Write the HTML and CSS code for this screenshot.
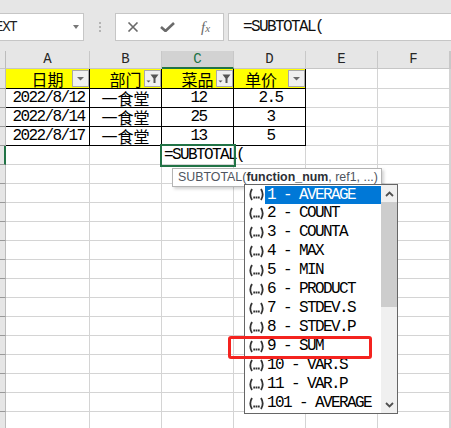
FILE: index.html
```html
<!DOCTYPE html>
<html>
<head>
<meta charset="utf-8">
<link rel="stylesheet" href="styles.css">
</head>
<body>
<div class="top">
  <div class="fbar">
    <div class="namebox"><span class="nb-text">TEXT</span><span class="nb-caret"></span></div>
    <div class="sep"><i></i><i></i><i></i></div>
    <div class="btns">
      <span class="slot"><svg width="12" height="10" viewBox="0 0 12 10"><path d="M1.5 0.5 L10.5 9.5 M10.5 0.5 L1.5 9.5" stroke="#6a6a6a" stroke-width="1.6" fill="none"/></svg></span>
      <span class="slot"><svg width="15" height="10" viewBox="0 0 15 10"><path d="M1 5 L5.5 9 L14 1" stroke="#6a6a6a" stroke-width="2.6" fill="none"/></svg></span>
      <span class="slot fx"><i>f</i><i class="x">x</i></span>
    </div>
    <div class="fbox">=SUBTOTAL(</div>
  </div>
</div>

<div class="sheet">
  <div class="row hdr">
    <div class="rh"></div><div class="ch">A</div><div class="ch">B</div><div class="ch sel">C</div><div class="ch">D</div><div class="ch">E</div><div class="ch">F</div><div class="ch"></div>
  </div>
  <div class="row r1">
    <div class="rh"></div>
    <div class="c t y sp"><span class="cn">日期</span><span class="fb"><svg width="15" height="15" viewBox="0 0 15 15"><path d="M4 6 H11 L7.5 9.5 Z" fill="#6a6a6a"/></svg></span></div>
    <div class="c t y sp"><span class="cn">部门</span><span class="fb"><svg width="15" height="15" viewBox="0 0 15 15"><path d="M1.5 9.5 H5.5 L3.5 11.5 Z" fill="#555"/><path d="M5.5 3.5 H13.5 L10.5 7.5 V12 H8.5 V7.5 Z" fill="#555"/></svg></span></div>
    <div class="c t y sp"><span class="cn">菜品</span><span class="fb"><svg width="15" height="15" viewBox="0 0 15 15"><path d="M1.5 9.5 H5.5 L3.5 11.5 Z" fill="#555"/><path d="M5.5 3.5 H13.5 L10.5 7.5 V12 H8.5 V7.5 Z" fill="#555"/></svg></span></div>
    <div class="c t y"><span class="cn">单价</span><span class="fb"><svg width="15" height="15" viewBox="0 0 15 15"><path d="M4 6 H11 L7.5 9.5 Z" fill="#6a6a6a"/></svg></span></div>
    <div class="c"></div><div class="c"></div><div class="c"></div>
  </div>
  <div class="row">
    <div class="rh"></div><div class="c t m">2022/8/12</div><div class="c t k">一食堂</div><div class="c t m">12</div><div class="c t m">2.5</div><div class="c"></div><div class="c"></div><div class="c"></div>
  </div>
  <div class="row">
    <div class="rh"></div><div class="c t m">2022/8/14</div><div class="c t k">一食堂</div><div class="c t m">25</div><div class="c t m">3</div><div class="c"></div><div class="c"></div><div class="c"></div>
  </div>
  <div class="row">
    <div class="rh"></div><div class="c t m">2022/8/17</div><div class="c t k">一食堂</div><div class="c t m">13</div><div class="c t m">5</div><div class="c"></div><div class="c"></div><div class="c"></div>
  </div>
  <div class="row">
    <div class="rh rsel"></div><div class="c"></div><div class="c"></div><div class="c active">=SUBTOTAL(</div><div class="c nob"></div><div class="c"></div><div class="c"></div><div class="c"></div>
  </div>
  <div class="row"><div class="rh"></div><div class="c"></div><div class="c"></div><div class="c"></div><div class="c"></div><div class="c"></div><div class="c"></div><div class="c"></div></div>
  <div class="row"><div class="rh"></div><div class="c"></div><div class="c"></div><div class="c"></div><div class="c"></div><div class="c"></div><div class="c"></div><div class="c"></div></div>
  <div class="row"><div class="rh"></div><div class="c"></div><div class="c"></div><div class="c"></div><div class="c"></div><div class="c"></div><div class="c"></div><div class="c"></div></div>
  <div class="row"><div class="rh"></div><div class="c"></div><div class="c"></div><div class="c"></div><div class="c"></div><div class="c"></div><div class="c"></div><div class="c"></div></div>
  <div class="row"><div class="rh"></div><div class="c"></div><div class="c"></div><div class="c"></div><div class="c"></div><div class="c"></div><div class="c"></div><div class="c"></div></div>
  <div class="row"><div class="rh"></div><div class="c"></div><div class="c"></div><div class="c"></div><div class="c"></div><div class="c"></div><div class="c"></div><div class="c"></div></div>
  <div class="row"><div class="rh"></div><div class="c"></div><div class="c"></div><div class="c"></div><div class="c"></div><div class="c"></div><div class="c"></div><div class="c"></div></div>
  <div class="row"><div class="rh"></div><div class="c"></div><div class="c"></div><div class="c"></div><div class="c"></div><div class="c"></div><div class="c"></div><div class="c"></div></div>
  <div class="row"><div class="rh"></div><div class="c"></div><div class="c"></div><div class="c"></div><div class="c"></div><div class="c"></div><div class="c"></div><div class="c"></div></div>
  <div class="row"><div class="rh"></div><div class="c"></div><div class="c"></div><div class="c"></div><div class="c"></div><div class="c"></div><div class="c"></div><div class="c"></div></div>
  <div class="row"><div class="rh"></div><div class="c"></div><div class="c"></div><div class="c"></div><div class="c"></div><div class="c"></div><div class="c"></div><div class="c"></div></div>
  <div class="row"><div class="rh"></div><div class="c"></div><div class="c"></div><div class="c"></div><div class="c"></div><div class="c"></div><div class="c"></div><div class="c"></div></div>
  <div class="row"><div class="rh"></div><div class="c"></div><div class="c"></div><div class="c"></div><div class="c"></div><div class="c"></div><div class="c"></div><div class="c"></div></div>
  <div class="row"><div class="rh"></div><div class="c"></div><div class="c"></div><div class="c"></div><div class="c"></div><div class="c"></div><div class="c"></div><div class="c"></div></div>

  <div class="tip">SUBTOTAL(<b>function_num</b>, ref1, ...)</div>

  <div class="dd">
    <div class="items">
      <div class="it on"><span class="ic"><svg width="17" height="13" viewBox="0 0 17 13"><path d="M4 1 Q0.6 6.5 4 12 M13 1 Q16.4 6.5 13 12" stroke="#333" stroke-width="1.8" fill="none"/><rect x="5.3" y="8.5" width="1.8" height="2" fill="#333"/><rect x="7.6" y="8.5" width="1.8" height="2" fill="#333"/><rect x="9.9" y="8.5" width="1.8" height="2" fill="#333"/></svg></span><span class="lb">1 - AVERAGE</span></div>
      <div class="it"><span class="ic"><svg width="17" height="13" viewBox="0 0 17 13"><path d="M4 1 Q0.6 6.5 4 12 M13 1 Q16.4 6.5 13 12" stroke="#333" stroke-width="1.8" fill="none"/><rect x="5.3" y="8.5" width="1.8" height="2" fill="#333"/><rect x="7.6" y="8.5" width="1.8" height="2" fill="#333"/><rect x="9.9" y="8.5" width="1.8" height="2" fill="#333"/></svg></span><span class="lb">2 - COUNT</span></div>
      <div class="it"><span class="ic"><svg width="17" height="13" viewBox="0 0 17 13"><path d="M4 1 Q0.6 6.5 4 12 M13 1 Q16.4 6.5 13 12" stroke="#333" stroke-width="1.8" fill="none"/><rect x="5.3" y="8.5" width="1.8" height="2" fill="#333"/><rect x="7.6" y="8.5" width="1.8" height="2" fill="#333"/><rect x="9.9" y="8.5" width="1.8" height="2" fill="#333"/></svg></span><span class="lb">3 - COUNTA</span></div>
      <div class="it"><span class="ic"><svg width="17" height="13" viewBox="0 0 17 13"><path d="M4 1 Q0.6 6.5 4 12 M13 1 Q16.4 6.5 13 12" stroke="#333" stroke-width="1.8" fill="none"/><rect x="5.3" y="8.5" width="1.8" height="2" fill="#333"/><rect x="7.6" y="8.5" width="1.8" height="2" fill="#333"/><rect x="9.9" y="8.5" width="1.8" height="2" fill="#333"/></svg></span><span class="lb">4 - MAX</span></div>
      <div class="it"><span class="ic"><svg width="17" height="13" viewBox="0 0 17 13"><path d="M4 1 Q0.6 6.5 4 12 M13 1 Q16.4 6.5 13 12" stroke="#333" stroke-width="1.8" fill="none"/><rect x="5.3" y="8.5" width="1.8" height="2" fill="#333"/><rect x="7.6" y="8.5" width="1.8" height="2" fill="#333"/><rect x="9.9" y="8.5" width="1.8" height="2" fill="#333"/></svg></span><span class="lb">5 - MIN</span></div>
      <div class="it"><span class="ic"><svg width="17" height="13" viewBox="0 0 17 13"><path d="M4 1 Q0.6 6.5 4 12 M13 1 Q16.4 6.5 13 12" stroke="#333" stroke-width="1.8" fill="none"/><rect x="5.3" y="8.5" width="1.8" height="2" fill="#333"/><rect x="7.6" y="8.5" width="1.8" height="2" fill="#333"/><rect x="9.9" y="8.5" width="1.8" height="2" fill="#333"/></svg></span><span class="lb">6 - PRODUCT</span></div>
      <div class="it"><span class="ic"><svg width="17" height="13" viewBox="0 0 17 13"><path d="M4 1 Q0.6 6.5 4 12 M13 1 Q16.4 6.5 13 12" stroke="#333" stroke-width="1.8" fill="none"/><rect x="5.3" y="8.5" width="1.8" height="2" fill="#333"/><rect x="7.6" y="8.5" width="1.8" height="2" fill="#333"/><rect x="9.9" y="8.5" width="1.8" height="2" fill="#333"/></svg></span><span class="lb">7 - STDEV.S</span></div>
      <div class="it"><span class="ic"><svg width="17" height="13" viewBox="0 0 17 13"><path d="M4 1 Q0.6 6.5 4 12 M13 1 Q16.4 6.5 13 12" stroke="#333" stroke-width="1.8" fill="none"/><rect x="5.3" y="8.5" width="1.8" height="2" fill="#333"/><rect x="7.6" y="8.5" width="1.8" height="2" fill="#333"/><rect x="9.9" y="8.5" width="1.8" height="2" fill="#333"/></svg></span><span class="lb">8 - STDEV.P</span></div>
      <div class="it"><span class="ic"><svg width="17" height="13" viewBox="0 0 17 13"><path d="M4 1 Q0.6 6.5 4 12 M13 1 Q16.4 6.5 13 12" stroke="#333" stroke-width="1.8" fill="none"/><rect x="5.3" y="8.5" width="1.8" height="2" fill="#333"/><rect x="7.6" y="8.5" width="1.8" height="2" fill="#333"/><rect x="9.9" y="8.5" width="1.8" height="2" fill="#333"/></svg></span><span class="lb">9 - SUM</span></div>
      <div class="it"><span class="ic"><svg width="17" height="13" viewBox="0 0 17 13"><path d="M4 1 Q0.6 6.5 4 12 M13 1 Q16.4 6.5 13 12" stroke="#333" stroke-width="1.8" fill="none"/><rect x="5.3" y="8.5" width="1.8" height="2" fill="#333"/><rect x="7.6" y="8.5" width="1.8" height="2" fill="#333"/><rect x="9.9" y="8.5" width="1.8" height="2" fill="#333"/></svg></span><span class="lb">10 - VAR.S</span></div>
      <div class="it"><span class="ic"><svg width="17" height="13" viewBox="0 0 17 13"><path d="M4 1 Q0.6 6.5 4 12 M13 1 Q16.4 6.5 13 12" stroke="#333" stroke-width="1.8" fill="none"/><rect x="5.3" y="8.5" width="1.8" height="2" fill="#333"/><rect x="7.6" y="8.5" width="1.8" height="2" fill="#333"/><rect x="9.9" y="8.5" width="1.8" height="2" fill="#333"/></svg></span><span class="lb">11 - VAR.P</span></div>
      <div class="it"><span class="ic"><svg width="17" height="13" viewBox="0 0 17 13"><path d="M4 1 Q0.6 6.5 4 12 M13 1 Q16.4 6.5 13 12" stroke="#333" stroke-width="1.8" fill="none"/><rect x="5.3" y="8.5" width="1.8" height="2" fill="#333"/><rect x="7.6" y="8.5" width="1.8" height="2" fill="#333"/><rect x="9.9" y="8.5" width="1.8" height="2" fill="#333"/></svg></span><span class="lb">101 - AVERAGE</span></div>
    </div>
    <div class="sb">
      <div class="sbtn"><svg width="9" height="6" viewBox="0 0 9 6"><path d="M1 5 L4.5 1.5 L8 5" stroke="#505050" stroke-width="1.8" fill="none"/></svg></div>
      <div class="thumb"></div>
      <div class="track"></div>
      <div class="sbtn"><svg width="9" height="6" viewBox="0 0 9 6"><path d="M1 1 L4.5 4.5 L8 1" stroke="#505050" stroke-width="1.8" fill="none"/></svg></div>
    </div>
  </div>

  <div class="mark"></div>
</div>
</body>
</html>
```

FILE: styles.css
```css
html, body {
  margin: 0;
  padding: 0;
}
body {
  width: 451px;
  height: 428px;
  overflow: hidden;
  background: #ffffff;
  font-family: "Liberation Mono", monospace;
  color: #000;
}

/* top formula bar */
.top {
  height: 51px;
  box-sizing: border-box;
  padding-top: 13px;
  background: #e6e6e6;
}
.fbar {
  display: flex;
  height: 28px;
}
.namebox {
  margin-left: -14px;
  width: 98px;
  box-sizing: border-box;
  border: 1px solid #c6c6c6;
  background: #fff;
  display: flex;
  align-items: center;
  justify-content: space-between;
  padding: 0 4px 0 1px;
}
.nb-text {
  font-size: 14px;
  letter-spacing: -1.3px;
  color: #222;
}
.nb-caret {
  width: 0;
  height: 0;
  border-left: 3.5px solid transparent;
  border-right: 3.5px solid transparent;
  border-top: 4px solid #777;
}
.sep {
  width: 31px;
  display: flex;
  flex-direction: column;
  align-items: center;
  justify-content: center;
  gap: 2px;
}
.sep i {
  display: block;
  width: 2px;
  height: 2px;
  background: #b4b4b4;
}
.btns {
  width: 109px;
  box-sizing: border-box;
  border: 1px solid #c6c6c6;
  background: #fff;
  display: flex;
  align-items: center;
}
.slot {
  width: 36px;
  display: flex;
  justify-content: center;
  align-items: center;
}
.slot:first-child { width: 35px; }
.fx {
  font-family: "Liberation Serif", serif;
  font-style: italic;
  color: #6a6a6a;
  font-size: 15px;
  padding-left: 3px;
}
.fx i { font-style: italic; }
.fx .x { font-size: 11px; position: relative; top: 1px; }
.fbox {
  flex: 1;
  margin-left: 4px;
  margin-right: -4px;
  box-sizing: border-box;
  border: 1px solid #c6c6c6;
  background: #fff;
  display: flex;
  align-items: center;
  padding-left: 14px;
  font-size: 16px;
  letter-spacing: -1.6px;
  color: #111;
}

/* sheet */
.sheet {
  position: relative;
}
.row {
  display: grid;
  grid-template-columns: 6px 84px 72px 72px 72px 72px 72px 1fr;
  grid-template-rows: minmax(0, 1fr);
  height: 19px;
  line-height: 17px;
}
.row > div {
  box-sizing: border-box;
  border-right: 1px solid #d4d4d4;
  border-bottom: 1px solid #d4d4d4;
  white-space: nowrap;
  min-width: 0;
  min-height: 0;
}
.row > .rh {
  background: #e6e6e6;
  border-right: 1px solid #bcbcbc;
  border-bottom: 1px solid #9a9a9a;
}
.row > .rsel {
  border-right: 2px solid #217346;
}
.hdr {
  height: 18px;
}
.hdr > .rh { border-bottom-color: #c6c6c6; }
.hdr > .ch {
  background: #e6e6e6;
  border-right: 1px solid #c8c8c8;
  border-bottom: 1px solid #c6c6c6;
  display: flex;
  align-items: center;
  justify-content: center;
  font-size: 14px;
  color: #262626;
}
.hdr > .ch.sel {
  background: #d2d2d2;
  color: #217346;
  border-bottom: 2px solid #217346;
}
.r1 { height: 20px; }

.row > .t {
  border-right-color: #000;
  border-bottom-color: #000;
  display: flex;
  align-items: center;
  justify-content: center;
  font-size: 16px;
}
.m {
  letter-spacing: -1.6px;
  padding-left: 2px;
}
.k {
  font-family: "Noto Sans CJK SC", sans-serif;
  font-size: 16px;
}
.y {
  background: #ffff00;
}
.y .cn {
  flex: 1;
  text-align: center;
  font-family: "Noto Sans CJK SC", sans-serif;
  font-size: 16px;
  line-height: 18px;
}
.sp::before {
  content: "";
  width: 17px;
  flex: none;
}
.fb {
  flex: none;
  width: 17px;
  height: 17px;
  box-sizing: border-box;
  border: 1px solid #a9a9a9;
  background: #f0f0f0;
  display: flex;
  align-items: center;
  justify-content: center;
}
.fb svg { display: block; }

.row > .active {
  position: relative;
  z-index: 2;
  outline: 2px solid #217346;
  outline-offset: 0px;
  display: flex;
  align-items: center;
  padding-left: 2px;
  font-size: 16px;
  letter-spacing: -1.6px;
  overflow: visible;
}
.row > .nob { border-right-color: #d4d4d4; }

/* tooltip */
.tip {
  position: absolute;
  left: 172px;
  top: 117px;
  width: 210px;
  height: 19px;
  box-sizing: border-box;
  border: 1px solid #b4b4b4;
  background: #fff;
  box-shadow: 2px 2px 3px rgba(0, 0, 0, 0.18);
  font-family: "Liberation Sans", sans-serif;
  font-size: 12.4px;
  color: #4f5560;
  padding-left: 5px;
  line-height: 17px;
  white-space: nowrap;
  z-index: 3;
}
.tip b {
  font-weight: bold;
  color: #2c2f36;
}

/* function dropdown */
.dd {
  position: absolute;
  left: 244px;
  top: 133px;
  width: 154px;
  height: 230px;
  box-sizing: border-box;
  border: 1px solid #666;
  background: #fff;
  display: flex;
  z-index: 4;
}
.items {
  flex: 1;
  display: flex;
  flex-direction: column;
}
.it {
  height: 19px;
  display: flex;
  align-items: center;
  flex: none;
}
.ic {
  width: 20px;
  flex: none;
  display: flex;
  justify-content: flex-end;
  box-sizing: border-box;
}
.ic svg { display: block; }
.lb {
  flex: 1;
  height: 19px;
  line-height: 19px;
  padding-left: 2px;
  font-size: 16px;
  letter-spacing: -1.6px;
  white-space: pre;
}
.it.on .lb {
  background: #0078d7;
  color: #fff;
  height: 18px;
  line-height: 18px;
}
.sb {
  width: 16px;
  display: flex;
  flex-direction: column;
  background: #f0f0f0;
}
.sbtn {
  height: 17px;
  flex: none;
  display: flex;
  align-items: center;
  justify-content: center;
}
.thumb {
  height: 105px;
  flex: none;
  background: #cdcdcd;
}
.track { flex: 1; }

/* red highlight */
.mark {
  position: absolute;
  left: 228px;
  top: 285px;
  width: 144px;
  height: 23px;
  box-sizing: border-box;
  border: 3px solid #f4231f;
  border-radius: 3px;
  z-index: 5;
}
```
